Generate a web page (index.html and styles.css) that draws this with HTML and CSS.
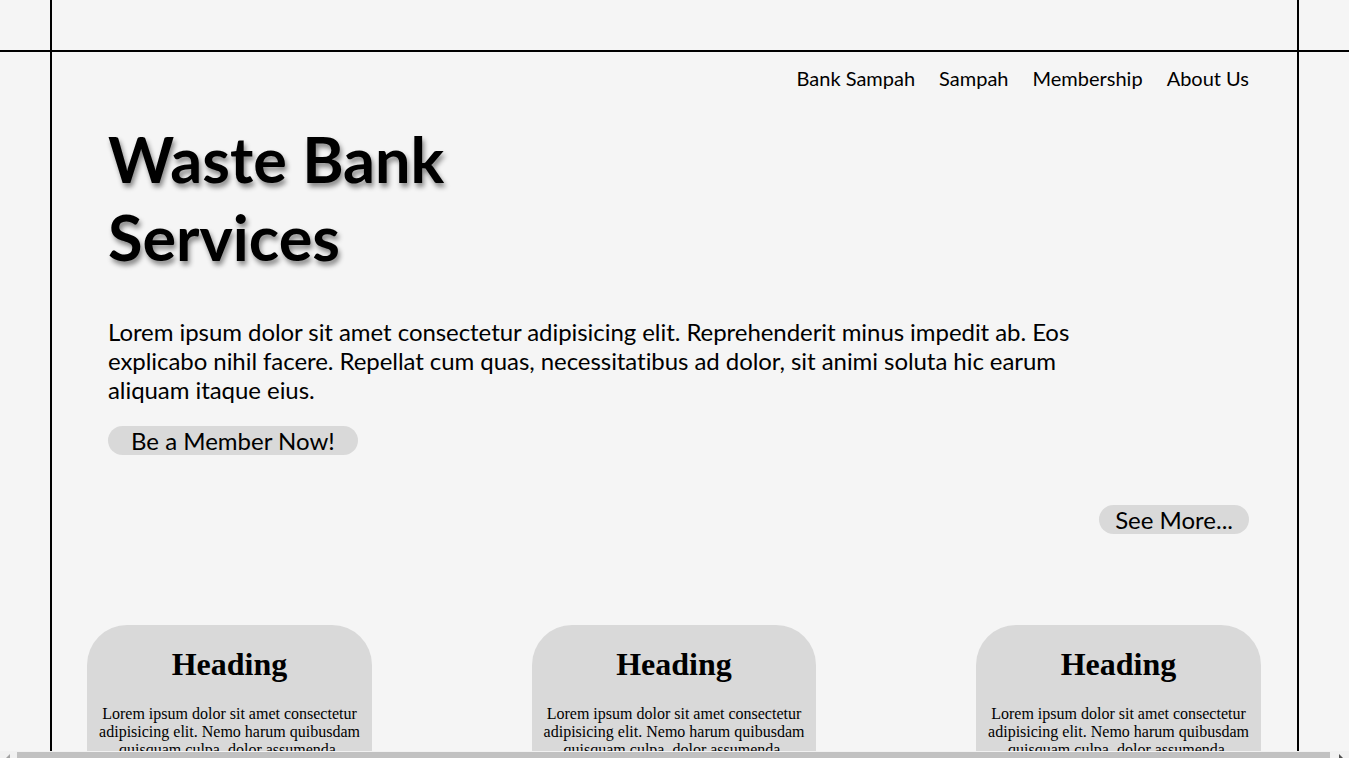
FILE: index.html
```html
<!DOCTYPE html>
<html lang="id">
<head>
<meta charset="utf-8">
<title>Waste Bank Services</title>
<link rel="stylesheet" href="styles.css">
</head>
<body>
<div class="page">
  <div class="frame">
    <div class="topbar"></div>
    <nav class="nav">
      <a class="nav-link" href="#">Bank Sampah</a>
      <a class="nav-link" href="#">Sampah</a>
      <a class="nav-link" href="#">Membership</a>
      <a class="nav-link" href="#">About Us</a>
    </nav>
    <section class="hero">
      <h1 class="hero-title">Waste Bank<br>Services</h1>
      <p class="hero-text">Lorem ipsum dolor sit amet consectetur adipisicing elit. Reprehenderit minus impedit ab. Eos explicabo nihil facere. Repellat cum quas, necessitatibus ad dolor, sit animi soluta hic earum aliquam itaque eius.</p>
      <a class="pill" href="#">Be a Member Now!</a>
      <div class="more-row"><a class="pill pill-more" href="#">See More...</a></div>
    </section>
    <section class="cards">
      <div class="card">
        <h1 class="card-title">Heading</h1>
        <p class="card-text">Lorem ipsum dolor sit amet consectetur adipisicing elit. Nemo harum quibusdam quisquam culpa, dolor assumenda.</p>
      </div>
      <div class="card">
        <h1 class="card-title">Heading</h1>
        <p class="card-text">Lorem ipsum dolor sit amet consectetur adipisicing elit. Nemo harum quibusdam quisquam culpa, dolor assumenda.</p>
      </div>
      <div class="card">
        <h1 class="card-title">Heading</h1>
        <p class="card-text">Lorem ipsum dolor sit amet consectetur adipisicing elit. Nemo harum quibusdam quisquam culpa, dolor assumenda.</p>
      </div>
    </section>
  </div>
</div>
<div class="hscroll" aria-hidden="true">
  <span class="hscroll-arrow hscroll-arrow-left"></span>
  <span class="hscroll-thumb"></span>
  <span class="hscroll-arrow hscroll-arrow-right"></span>
</div>
</body>
</html>
```
FILE: styles.css
```css
html {
  overflow: hidden;
}
body {
  margin: 0;
  background: #f5f5f5;
  font-family: Lato, "Liberation Sans", sans-serif;
  color: #000;
  font-variant-ligatures: no-common-ligatures;
}
.page {
  width: 1355px;
  height: 100vh;
  overflow: hidden;
}
.frame {
  margin-left: 50px;
  min-height: 1000px;
  border-left: 2px solid #000;
  border-right: 2px solid #000;
  padding: 0 48px 0 56px;
  width: 1141px;
}
.topbar {
  height: 50px;
  border-bottom: 2px solid #000;
  margin: 0 -1400px 0 -120px;
}
.nav {
  display: flex;
  justify-content: flex-end;
  gap: 24px;
  padding-top: 14px;
}
.nav-link {
  color: #000;
  text-decoration: none;
  font-size: 20px;
  line-height: 24px;
}
.hero {
  padding-top: 30px;
}
.hero-title {
  margin: 0;
  font-size: 63px;
  line-height: 78px;
  font-weight: 700;
  text-shadow: 2px 4px 5px rgba(0, 0, 0, 0.45);
}
.hero-text {
  margin: 41px 0 0;
  max-width: 1000px;
  font-size: 24px;
  line-height: 29px;
  letter-spacing: -0.06px;
}
.pill {
  display: inline-block;
  margin-top: 22px;
  background: #d9d9d9;
  color: #000;
  text-decoration: none;
  font-size: 24px;
  line-height: 29px;
  padding: 0 23px;
  border-radius: 15px;
}
.more-row {
  display: flex;
  justify-content: flex-end;
  margin-top: 50px;
}
.pill-more {
  margin-top: 0;
  padding: 0 16px;
}
.cards {
  display: flex;
  justify-content: center;
  gap: 160px;
  margin: 91px -23px 0 -32px;
}
.card {
  display: flow-root;
  width: 264.5px;
  min-height: 260px;
  padding: 0 10px;
  background: #d9d9d9;
  border-radius: 40px 40px 0 0;
  font-family: "Liberation Serif", "Times New Roman", serif;
  text-align: center;
}
.card-title {
  font-size: 32px;
  margin: 21px 0 22px;
}
.card-text {
  font-size: 16px;
  margin: 0;
}
.hscroll {
  position: fixed;
  left: 0;
  right: 0;
  bottom: 0;
  height: 7px;
  background: #f1f1f1;
}
.hscroll-thumb {
  position: absolute;
  left: 17px;
  width: 1313px;
  top: 1px;
  bottom: 0;
  background: #c1c1c1;
}
.hscroll-arrow {
  position: absolute;
  bottom: 0;
  width: 0;
  height: 0;
  border-top: 4px solid transparent;
}
.hscroll-arrow-left {
  left: 6px;
  border-right: 4px solid #a3a3a3;
}
.hscroll-arrow-right {
  right: 6px;
  border-left: 4px solid #505050;
}
```
